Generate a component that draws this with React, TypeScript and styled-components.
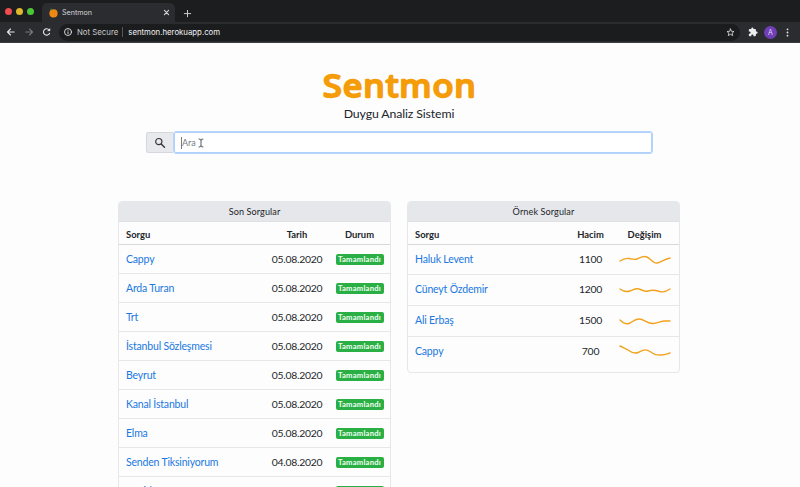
import React from "react";
import styled, { createGlobalStyle } from "styled-components";

const Global = createGlobalStyle`
  * { box-sizing: border-box; }
  html, body { margin: 0; height: 487px; overflow: hidden; background: #fdfdfd; }
  body { font-family: Lato, "Open Sans", sans-serif; color: #212529; }
`;
const Window = styled.div`width: 800px; height: 487px; overflow: hidden; display: flex; flex-direction: column;`;
const TabStrip = styled.div`
  height: 22px; flex: none; background: #1c1d1e; display: flex; align-items: flex-end; padding-left: 5px;
`;
const Lights = styled.div`display: flex; gap: 4px; align-self: center; width: 37px;`;
const Light = styled.span<{ $color: string }>`
  width: 7px; height: 7px; border-radius: 50%; background: ${p => p.$color};
`;
const Tab = styled.div`
  width: 133px; height: 19px; background: #2b2c30; border-radius: 5px 5px 0 0;
  display: flex; align-items: center; padding: 0 5px 0 7px; color: #d8d9dc;
  font: 7.1px Inter, sans-serif;
`;
const TabTitle = styled.span`flex: 1; padding-left: 4px;`;
const NewTab = styled.div`padding: 0 0 4px 8px; display: flex; color: #c8c9cb;`;
const Toolbar = styled.div`
  height: 21px; flex: none; background: #2b2c30; border-bottom: 1px solid #3c3d40;
  display: flex; align-items: center; padding: 0 8px 0 6px; color: #e4e5e7;
`;
const NavIcons = styled.div`display: flex; gap: 8px; width: 53px;`;
const Address = styled.div`
  width: 681px; height: 17px; border-radius: 9px; background: #1b1c1e;
  display: flex; align-items: center; padding: 0 5px 0 4px; font: 7.8px Inter, sans-serif;
`;
const Secure = styled.span`padding: 0 4px 0 4px; color: #c8c9cc; border-right: 1px solid #55565a;`;
const Url = styled.span`flex: 1; padding-left: 5px; color: #f0f1f2;`;
const Actions = styled.div`display: flex; align-items: center; margin-left: auto; gap: 6px;`;
const Avatar = styled.span`
  width: 13px; height: 13px; border-radius: 50%; background: #6e3fb5; color: #e5d9f5;
  font: 7px/13px Inter, sans-serif; text-align: center;
`;
const Page = styled.main`
  flex: 1; background: #fdfdfd; display: flex; flex-direction: column; align-items: center; min-height: 0;
`;
const Logo = styled.svg`display: block; width: 160px; height: 40px; margin-top: 23px; flex: none;`;
const Tagline = styled.div`font-size: 12.3px; line-height: 16px; letter-spacing: -0.12px; flex: none; margin-right: 2px;`;
const Search = styled.div`
  display: flex; width: 507px; height: 23px; margin: 9px 1px 0 0; flex: none; align-items: center;
`;
const SearchAddon = styled.div`
  width: 27px; height: 21px; background: #e8e9ed; border: 1px solid #d4d7db; border-right: 0;
  border-radius: 3px 0 0 3px; display: flex; align-items: center; justify-content: center;
`;
const Field = styled.div`
  flex: 1; height: 23px; background: #fff; border: 1px solid #b6d5fb; border-radius: 3px;
  box-shadow: inset 0 0 0 1px #b0d1fb; display: flex; align-items: center; padding-left: 7px;
  color: #777c81; font-size: 9px;
`;
const Caret = styled.span`width: 1px; height: 12px; background: #77797c;`;
const Placeholder = styled.span`width: 16px;`;
const Columns = styled.div`
  display: flex; align-items: flex-start; gap: 16px; width: 562px; margin: 47px 2px 0 0; min-height: 0;
`;
const Card = styled.section<{ $tail?: number }>`
  width: 273px; border: 1px solid #e6e7e9; border-radius: 4px; overflow: hidden; flex: none;
  padding-bottom: ${p => p.$tail ?? 0}px;
`;
const CardTitle = styled.h2`
  margin: 0; height: 19.5px; background: #e6e7eb; border-bottom: 1px solid #e0e1e4;
  font-size: 9.1px; line-height: 19px; font-weight: 400; text-align: center; letter-spacing: 0.1px;
`;
const Row = styled.div<{ $kind: "recent" | "sample"; $height: number; $line?: boolean }>`
  display: grid; height: ${p => p.$height}px; align-items: start;
  padding: ${p => (p.$kind === "recent" ? "0 3px 0 7px" : "0 4.5px 0 7px")};
  grid-template-columns: ${p => (p.$kind === "recent" ? "1fr 70px 55px" : "1fr 48px 60px")};
  border-bottom: ${p => (p.$line === false ? "0" : "1px solid #e6e7e9")};
`;
const HeadRow = styled(Row)`border-bottom: 1px solid #d6d9dc; font-size: 9.4px; font-weight: 700; line-height: 25px; height: 23px;`;
const Cell = styled.span<{ $center?: boolean }>`text-align: ${p => (p.$center ? "center" : "left")};`;
const Value = styled(Cell)`font-size: 10.4px; line-height: 28px; letter-spacing: -0.25px;`;
const Query = styled.a`
  color: #2078e0; font-size: 10.5px; line-height: 28px; letter-spacing: -0.18px; text-decoration: none; white-space: nowrap;
`;
const BadgeCell = styled.span`display: flex; justify-content: center; padding: 9px 0 0 0;`;
const Badge = styled.span`
  width: 48px; height: 11px; border-radius: 2px; background: #2aaf44; color: #f3fff5;
  font-size: 7.6px; line-height: 11px; font-weight: 700; text-align: center; letter-spacing: 0.25px;
`;
const Spark = styled.svg`width: 52px; height: 24px; margin: 3px 0 0 4px; display: block;`;

const recent: [string, string][] = [
  ["Cappy", "05.08.2020"], ["Arda Turan", "05.08.2020"], ["Trt", "05.08.2020"],
  ["İstanbul Sözleşmesi", "05.08.2020"], ["Beyrut", "05.08.2020"], ["Kanal İstanbul", "05.08.2020"],
  ["Elma", "05.08.2020"], ["Senden Tiksiniyorum", "04.08.2020"], ["Covid", "04.08.2020"],
];
const samples: [string, string, string][] = [
  ["Haluk Levent", "1100", "M1 13C4 11 7 10 10 10.5S15 12 18 11S24 7 28 9S34 16 38 15S46 11 51 10"],
  ["Cüneyt Özdemir", "1200", "M1 11C5 14 8 14 11 13S16 10 20 11S25 14 29 13S36 12 39 13S45 15 51 11"],
  ["Ali Erbaş", "1500", "M1 11C4 14 7 15.5 10 14.5S15 10 20 10S29 15 34 14.5S42 12 46 12L51 12"],
  ["Cappy", "700", "M1 6C5 8 7 8.5 9 10S15 14 19 12.5S26 8 31 11.5S37 15 42 15S48 14 51 13"],
];

const stroke = { fill: "none", stroke: "currentColor", strokeLinecap: "round", strokeLinejoin: "round" } as const;

export default function App() {
  return (
    <Window>
      <Global />
      <TabStrip>
        <Lights><Light $color="#f24b50" /><Light $color="#e0b82c" /><Light $color="#4cc735" /></Lights>
        <Tab>
          <svg width="9" height="10" viewBox="0 0 9 10">
            <circle cx="4.5" cy="5.4" r="4.1" fill="#f08a12" />
            <path d="M4.3 2.2C3 2.4 1.5 1.8 1 .9 2.4.3 4 .8 4.3 2.2Z" fill="#55753a" />
            <path d="M3 5h.7M5.5 4h.7M5 7h.7" stroke="#b7610a" strokeWidth=".6" />
          </svg>
          <TabTitle>Sentmon</TabTitle>
          <svg width="7" height="7" viewBox="0 0 7 7" {...stroke} strokeWidth="1.1"><path d="M1.4 1.4 5.6 5.6M5.6 1.4 1.4 5.6" /></svg>
        </Tab>
        <NewTab><svg width="9" height="9" viewBox="0 0 9 9" {...stroke} strokeWidth="1"><path d="M4.5 1.4v6.4M1.3 4.6h6.4" /></svg></NewTab>
      </TabStrip>
      <Toolbar>
        <NavIcons>
          <svg width="10" height="10" viewBox="0 0 10 10" {...stroke} strokeWidth="1.1"><path d="M8.2 5H1.6M4.5 2 1.5 5l3 3" /></svg>
          <svg width="10" height="10" viewBox="0 0 10 10" {...stroke} stroke="#77797c" strokeWidth="1.1"><path d="M1.8 5h6.6M5.5 2l3 3-3 3" /></svg>
          <svg width="10" height="10" viewBox="0 0 10 10" {...stroke} strokeWidth="1.1"><path d="M7.2 3A3.2 3.2 0 1 0 7.6 6.2" /><path d="M8.1 1.5v2.6H5.5Z" fill="currentColor" strokeWidth=".2" /></svg>
        </NavIcons>
        <Address>
          <svg width="10" height="10" viewBox="0 0 10 10" {...stroke} strokeWidth=".9"><circle cx="5" cy="5" r="3.5" /><path d="M5 4.8v1.8M5 3.2v.1" /></svg>
          <Secure>Not Secure</Secure><Url>sentmon.herokuapp.com</Url>
          <svg width="9" height="9" viewBox="0 0 9 9" {...stroke} strokeWidth=".8"><path d="m4.5 1 1 2.3 2.5.2-1.9 1.6.6 2.5-2.2-1.3-2.2 1.3.6-2.5L1 3.5l2.5-.2Z" /></svg>
        </Address>
        <Actions>
          <svg width="10" height="10" viewBox="0 0 24 24" fill="#eeeeef"><path d="M20.5 11H19V7a2 2 0 0 0-2-2h-4V3.5a2.5 2.5 0 0 0-5 0V5H4a2 2 0 0 0-2 2v3.8h1.5a2.7 2.7 0 0 1 0 5.4H2V20a2 2 0 0 0 2 2h3.8v-1.5a2.7 2.7 0 0 1 5.4 0V22H17a2 2 0 0 0 2-2v-4h1.5a2.5 2.5 0 0 0 0-5Z" /></svg>
          <Avatar>A</Avatar>
          <svg width="9" height="9" viewBox="0 0 9 9" fill="#e4e5e7"><circle cx="4.5" cy="1.3" r=".9" /><circle cx="4.5" cy="4.5" r=".9" /><circle cx="4.5" cy="7.7" r=".9" /></svg>
        </Actions>
      </Toolbar>
      <Page>
        <Logo viewBox="0 0 160 40">
          <text x="3" y="31.4" textLength="154" lengthAdjust="spacingAndGlyphs" letterSpacing="1.3" fontFamily="Noto Sans, sans-serif" fontWeight="400" fontSize="31" fill="#f59c0b" stroke="#f59c0b" strokeWidth="2.3" strokeLinejoin="round">Sentmon</text>
        </Logo>
        <Tagline>Duygu Analiz Sistemi</Tagline>
        <Search>
          <SearchAddon>
            <svg width="12" height="12" viewBox="0 0 12 12" {...stroke} stroke="#34373a" strokeWidth="1.2"><circle cx="4.8" cy="4.6" r="3.1" /><path d="m7.2 7 3.3 3.3" strokeWidth="1.4" /></svg>
          </SearchAddon>
          <Field>
            <Caret /><Placeholder>Ara</Placeholder>
            <svg width="6" height="10" viewBox="0 0 6 10" {...stroke} stroke="#44474a" strokeWidth=".9"><path d="M1 1q2 0 2 1v6q0 1-2 1M5 1Q3 1 3 2M5 9Q3 9 3 8" /></svg>
          </Field>
        </Search>
        <Columns>
          <Card>
            <CardTitle>Son Sorgular</CardTitle>
            <HeadRow $kind="recent" $height={23}><Cell>Sorgu</Cell><Cell $center>Tarih</Cell><Cell $center>Durum</Cell></HeadRow>
            {recent.map(([name, date]) => (
              <Row key={name} $kind="recent" $height={29}>
                <Query>{name}</Query><Value $center>{date}</Value><BadgeCell><Badge>Tamamlandı</Badge></BadgeCell>
              </Row>
            ))}
          </Card>
          <Card $tail={5}>
            <CardTitle>Örnek Sorgular</CardTitle>
            <HeadRow $kind="sample" $height={23}><Cell>Sorgu</Cell><Cell $center>Hacim</Cell><Cell $center>Değişim</Cell></HeadRow>
            {samples.map(([name, volume, path], i) => (
              <Row key={name} $kind="sample" $height={30.7} $line={i < 3}>
                <Query>{name}</Query><Value $center>{volume}</Value>
                <Spark viewBox="0 0 52 24"><path d={path} fill="none" stroke="#f3a21d" strokeWidth="1.4" strokeLinecap="round" /></Spark>
              </Row>
            ))}
          </Card>
        </Columns>
      </Page>
    </Window>
  );
}
